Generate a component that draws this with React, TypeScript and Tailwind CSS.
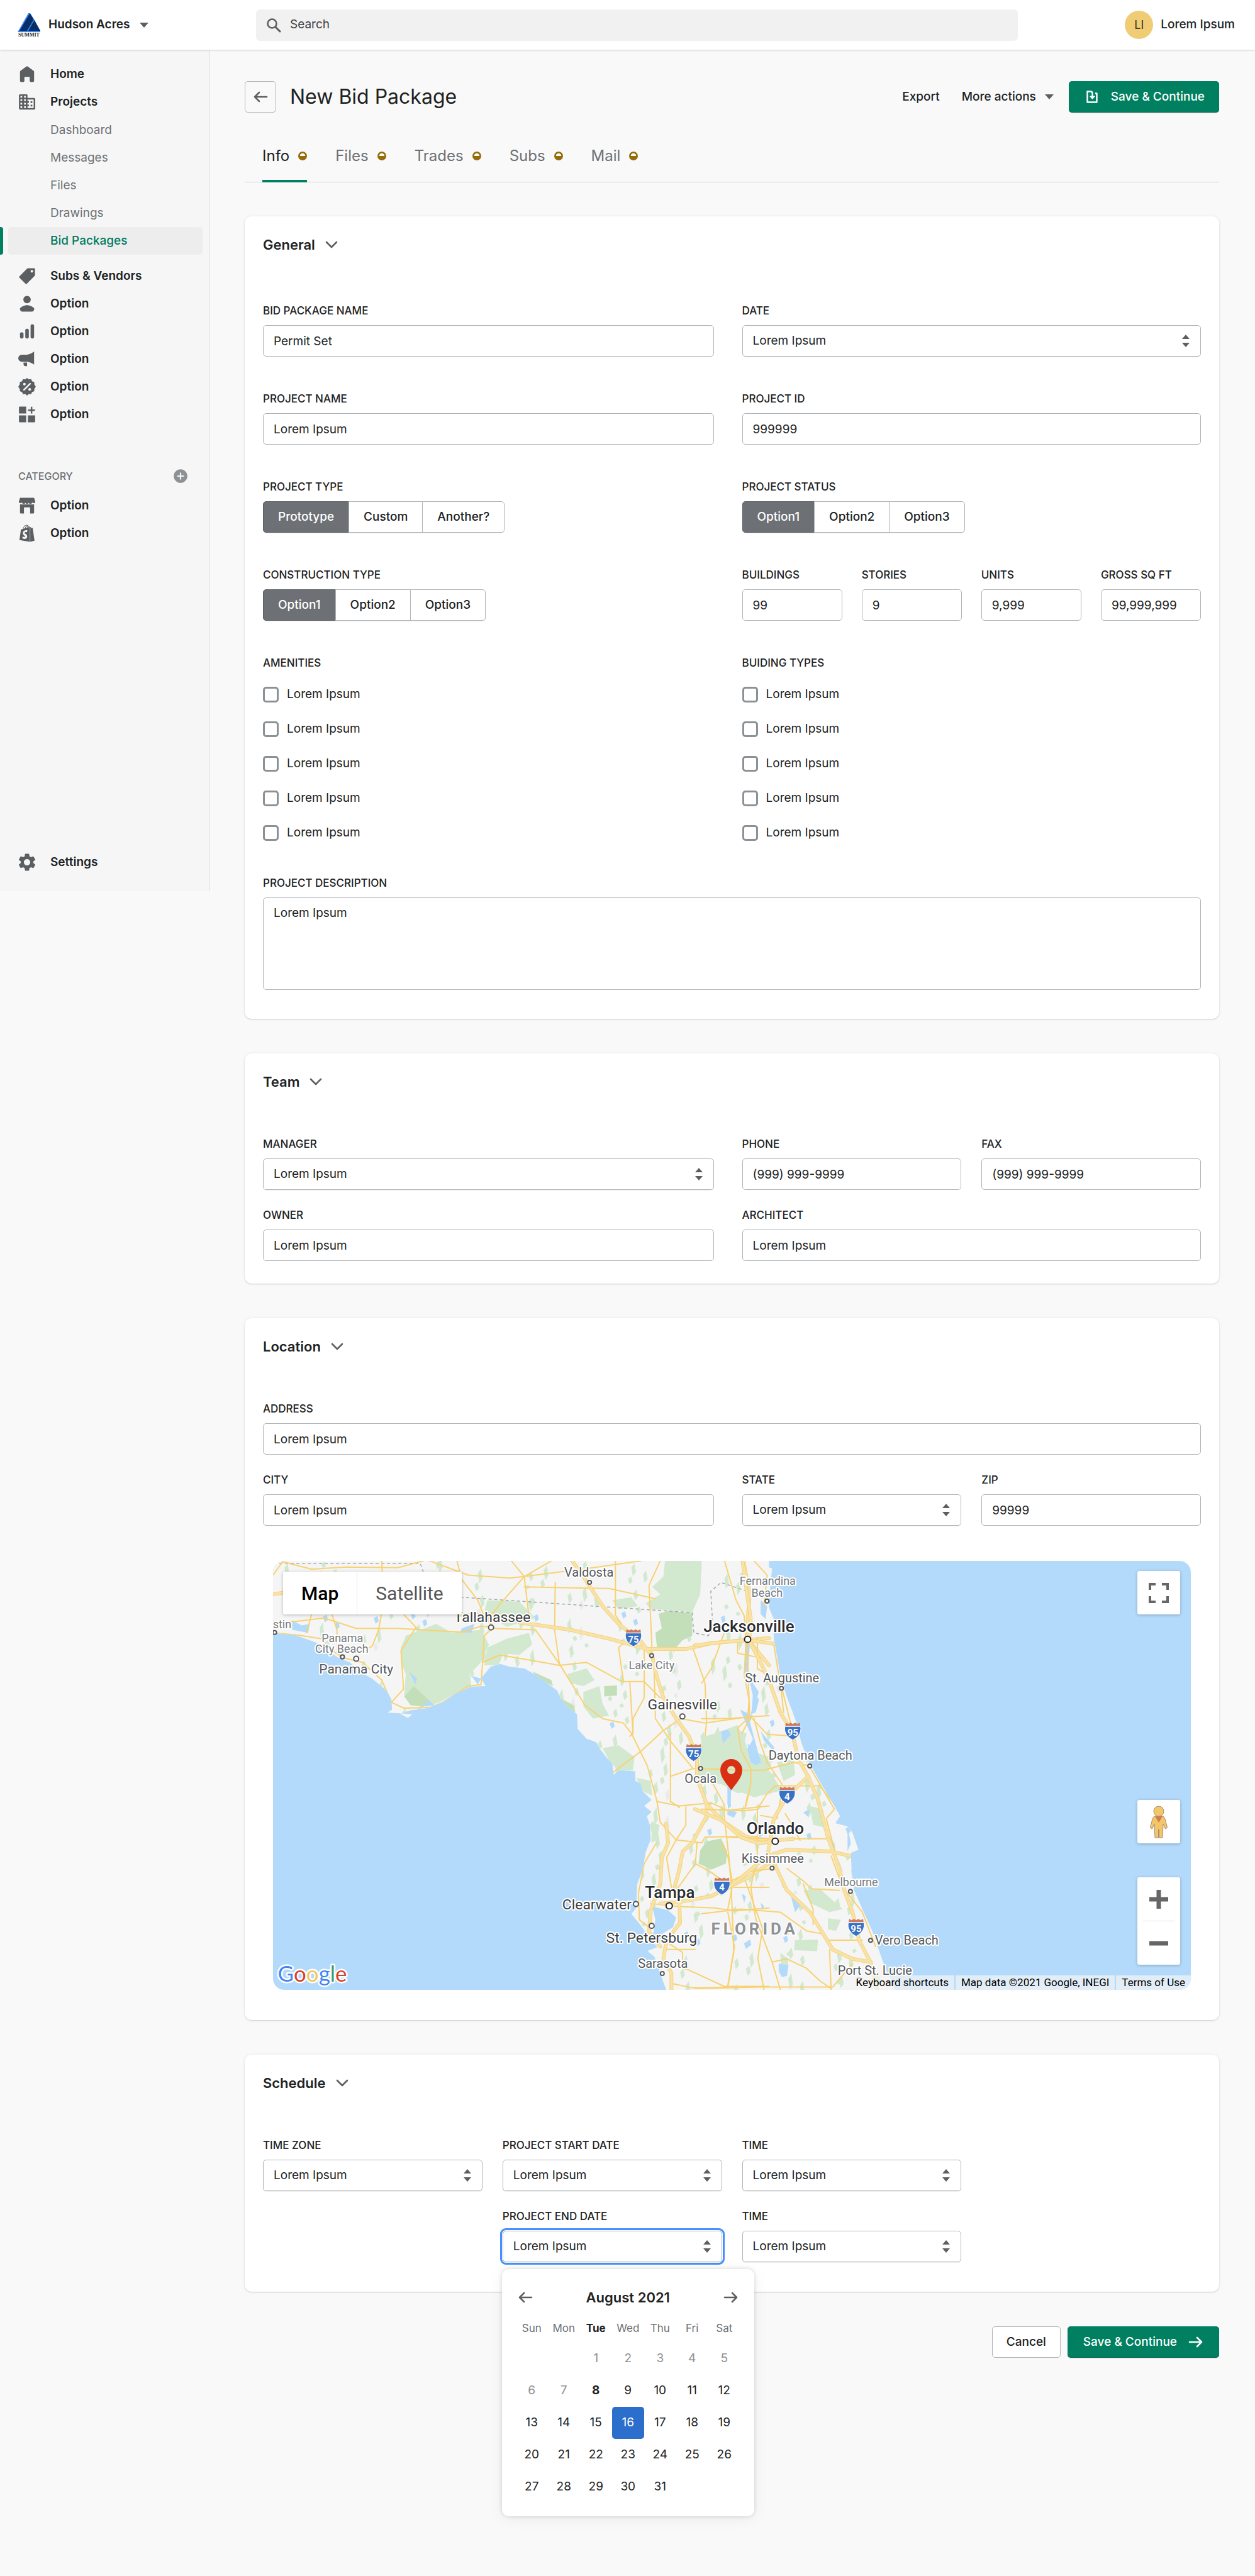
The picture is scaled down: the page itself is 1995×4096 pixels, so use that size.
import React, { useId, useState } from "react";
import { FaShopify } from "react-icons/fa";
import { MdAddCircle, MdSettings } from "react-icons/md";

/* ---------- Icons ---------- */

function Icon({ children }: { children: React.ReactNode }) {
  return (
    <svg viewBox="0 0 20 20" className="h-7 w-7 shrink-0 fill-[#5c5f62]" aria-hidden="true">
      {children}
    </svg>
  );
}

const HomeIcon = () => (
  <Icon>
    <path d="M18 7.3V17.5a1.5 1.5 0 0 1-1.5 1.5h-2a1.5 1.5 0 0 1-1.5-1.5V13H7v4.5A1.5 1.5 0 0 1 5.5 19h-2A1.5 1.5 0 0 1 2 17.5V7.3a1.5 1.5 0 0 1 .6-1.2l6.6-4.9a1.5 1.5 0 0 1 1.6 0l6.6 4.9a1.5 1.5 0 0 1 .6 1.2z" />
  </Icon>
);

const BuildingIcon = () => (
  <Icon>
    <path
      fillRule="evenodd"
      d="M2 1.500h7.500A1 1 0 0 1 10.500 2.500V5.500H18a1.300 1.300 0 0 1 1.300 1.300V17.500a1.300 1.300 0 0 1-1.300 1.300H2A1.300 1.300 0 0 1 .8 17.500V2.700A1.200 1.200 0 0 1 2 1.500zM2.500 3.200v2h2v-2zM6.600 3.200v2h2v-2zM2.500 7v2h2V7zM6.600 7v2h2V7zM2.500 11v2h2v-2zM6.600 11v2h2v-2zM2.500 15v2h2v-2zM6.600 15v2h2v-2zM10.500 7.300v1.700h1.700v2h-1.700v2h1.700v2h-1.700v2h7V7.300z"
    />
    <path d="M14 9.2h2v2h-2zM14 13.2h2v2h-2z" />
  </Icon>
);

const TagIcon = () => (
  <Icon>
    <path
      fillRule="evenodd"
      d="M10.3 1.3A1 1 0 0 1 11 1h7a1 1 0 0 1 1 1v7a1 1 0 0 1-.3.7l-9 9a1 1 0 0 1-1.4 0l-7-7a1 1 0 0 1 0-1.4zM15.5 6a1.5 1.5 0 1 0 0-3 1.5 1.5 0 0 0 0 3z"
    />
  </Icon>
);

const PersonIcon = () => (
  <Icon>
    <circle cx="10" cy="5.2" r="4.2" />
    <path d="M2.6 14.5c1.4-1.1 4.1-2.9 7.4-2.9s6.1 1.8 7.5 2.9c.6.5.8 1.3.6 2l-.4 1a2.1 2.1 0 0 1-2 1.500H4.4a2.1 2.1 0 0 1-2-1.500l-.4-1c-.2-.7 0-1.500.6-2z" />
  </Icon>
);

const BarsIcon = () => (
  <Icon>
    <rect x="2" y="11" width="4" height="7" rx="1.5" />
    <rect x="8" y="7" width="4" height="11" rx="1.5" />
    <rect x="14" y="2" width="4" height="16" rx="1.5" />
  </Icon>
);

const MegaphoneIcon = () => (
  <Icon>
    <path d="M18 1.5v14.7c-2.6-1.700-5-3-8-3.200H4A3.500 3.500 0 0 1 4 5h6c3-.2 5.400-1.800 8-3.500zM6 14h4v4H8.500A2.500 2.500 0 0 1 6 15.500z" />
  </Icon>
);

const DiscountIcon = () => (
  <Icon>
    <path d="M10 0l2 1.600 2.600-.3 1.100 2.400 2.500 1 .1 2.700L20 10l-1.700 2.300-.1 2.700-2.500 1-1.100 2.400-2.600-.2L10 20l-2-1.800-2.600.2L4.300 16l-2.500-1-.1-2.700L0 10l1.700-2.600.1-2.700 2.500-1 1.100-2.400 2.600.3z" />
    <path d="M6.500 13.500l7-7" stroke="#f6f6f6" strokeWidth="1.8" strokeLinecap="round" />
    <circle cx="7" cy="7" r="1.5" fill="#f6f6f6" />
    <circle cx="13" cy="13" r="1.5" fill="#f6f6f6" />
  </Icon>
);

const AppsIcon = () => (
  <Icon>
    <path d="M1.600 1H9v8H.8V1.800A.8.8 0 0 1 1.600 1zM.8 11H9v8H1.600a.8.8 0 0 1-.8-.8zM11 11h8.200v7.200a.8.8 0 0 1-.8.8H11zM14.200 1.200h1.800V4.200h3V6h-3v3h-1.800V6h-3V4.200h3z" />
  </Icon>
);

const StoreIcon = () => (
  <Icon>
    <path d="M2 1h16l1.300 4.500c0 1-.8 1.700-1.700 1.700a1.900 1.900 0 0 1-1.900-1.200 1.900 1.900 0 0 1-3.800 0 1.900 1.900 0 0 1-3.800 0 1.900 1.900 0 0 1-3.800 0A1.900 1.900 0 0 1 2.400 7.200C1.500 7.200.7 6.500.7 5.500z" />
    <path d="M2 8.500h16v9.500a1 1 0 0 1-1 1h-3.500v-7h-7v7H3a1 1 0 0 1-1-1z" />
  </Icon>
);

const ArrowIcon = ({ className }: { className?: string }) => (
  <svg viewBox="0 0 24 20" className={`h-5 w-6 shrink-0 fill-none stroke-current ${className ?? ""}`} aria-hidden="true">
    <path d="M2 10h19M14 3l7 7-7 7" strokeWidth="2.6" strokeLinecap="round" strokeLinejoin="round" />
  </svg>
);

const CaretIcon = () => (
  <svg viewBox="0 0 14 8" className="h-2 w-3.5 shrink-0 fill-[#5c5f62]" aria-hidden="true">
    <path d="M0 0h14L7 8z" />
  </svg>
);

const SummitLogo = () => (
  <svg viewBox="0 0 38 40" className="h-10 w-[38px] shrink-0" role="img" aria-label="Summit">
    <path d="M18 1h3l7 11 9 17v2H1z" fill="#3b87f7" />
    <path d="M20.500 1l6 10L16 29H4zM27.500 12l9.500 17H18z" fill="#072f66" />
    <text x="19" y="38" textAnchor="middle" fontSize="8" className="fill-[#222] font-['Liberation_Serif',serif] font-bold">
      SUMMIT
    </text>
  </svg>
);

/* ---------- Form pieces ---------- */

const LABEL = "block h-6 text-[17px] leading-6 font-medium uppercase text-[#202223]";
const CONTROL =
  "block h-[50px] w-full rounded-[5px] border border-[#aeb4b9] bg-white px-4 text-[19px] text-[#202223] outline-none";

function TextField({ label, value }: { label: string; value: string }) {
  const id = useId();
  return (
    <div>
      <label htmlFor={id} className={LABEL}>
        {label}
      </label>
      <input id={id} type="text" defaultValue={value} className={`mt-[11px] ${CONTROL}`} />
    </div>
  );
}

function SelectField({
  label,
  focused,
  children,
}: {
  label: string;
  focused?: boolean;
  children?: React.ReactNode;
}) {
  const id = useId();
  return (
    <div>
      <label htmlFor={id} className={LABEL}>
        {label}
      </label>
      <div
        className={`relative mt-[11px] rounded-[5px] shadow-[0_1px_1px_rgba(0,0,0,0.08)] ${
          focused ? "outline-[3px] outline-offset-1 outline-[#458fff]" : ""
        }`}
      >
        <select id={id} className={`appearance-none ${CONTROL}`}>
          <option>Lorem Ipsum</option>
        </select>
        <svg
          viewBox="0 0 12 20"
          className="pointer-events-none absolute right-[18px] top-[15px] h-5 w-3 fill-[#5c5f62]"
          aria-hidden="true"
        >
          <path d="M6 0l6 7H0zM6 20l6-7H0z" />
        </svg>
        {children}
      </div>
    </div>
  );
}

function Segmented({ label, options }: { label: string; options: string[] }) {
  const [active, setActive] = useState(options[0]);
  return (
    <fieldset>
      <legend className={LABEL}>{label}</legend>
      <div className="mt-[11px] flex">
        {options.map((o) => (
          <button
            key={o}
            type="button"
            aria-pressed={active === o}
            onClick={() => setActive(o)}
            className={`-ml-px h-[50px] border px-[23px] text-[19px] font-medium shadow-[0_1px_1px_rgba(0,0,0,0.08)] first:ml-0 first:rounded-l-[5px] last:rounded-r-[5px] ${
              active === o
                ? "border-[#5a5d61] bg-[#6d7175] text-white"
                : "border-[#aeb4b9] bg-white text-[#202223]"
            }`}
          >
            {o}
          </button>
        ))}
      </div>
    </fieldset>
  );
}

function CheckList({ label }: { label: string }) {
  return (
    <fieldset>
      <legend className={LABEL}>{label}</legend>
      <div className="mt-[26px] flex flex-col gap-[30px]">
        {[1, 2, 3, 4, 5].map((n) => (
          <label key={n} className="flex h-[25px] items-center gap-[13px] text-[19px] text-[#202223]">
            <input
              type="checkbox"
              className="h-[25px] w-[25px] appearance-none rounded-[5px] border-[3px] border-[#8c9196] bg-white checked:bg-[#008060]"
            />
            Lorem Ipsum
          </label>
        ))}
      </div>
    </fieldset>
  );
}

function Card({ title, className, children }: { title: string; className: string; children: React.ReactNode }) {
  return (
    <section
      className={`rounded-[11px] bg-white px-[29px] pt-7 shadow-[0_0_5px_rgba(23,24,24,0.07),0_1px_2px_rgba(0,0,0,0.14)] ${className}`}
    >
      <h2>
        <button type="button" className="flex h-[34px] items-center gap-4 text-[22px] font-semibold text-[#202223]">
          {title}
          <svg viewBox="0 0 20 12" className="h-3 w-5 fill-none stroke-[#5c5f62]" aria-hidden="true">
            <path d="M2 2l8 8 8-8" strokeWidth="2.6" strokeLinecap="round" strokeLinejoin="round" />
          </svg>
        </button>
      </h2>
      {children}
    </section>
  );
}

/* ---------- Calendar ---------- */

const WEEKDAYS = ["Sun", "Mon", "Tue", "Wed", "Thu", "Fri", "Sat"];
const WEEKS = [0, 1, 2, 3, 4].map((w) => WEEKDAYS.map((_, d) => w * 7 + d - 1));

function Calendar() {
  const [selected, setSelected] = useState(16);
  return (
    <div className="absolute -left-px top-[61px] z-10 w-[401px] rounded-[11px] bg-white px-[22px] pt-[23px] pb-[21px] shadow-[0_4px_24px_rgba(23,24,24,0.06),0_0_6px_rgba(23,24,24,0.16)]">
      <div className="mb-1.5 flex h-11 items-center justify-between px-[3px] text-[#5c5f62]">
        <button type="button" aria-label="Previous month">
          <ArrowIcon className="rotate-180" />
        </button>
        <h3 className="text-[22px] font-semibold text-[#202223]">August 2021</h3>
        <button type="button" aria-label="Next month">
          <ArrowIcon />
        </button>
      </div>
      <table className="w-full table-fixed text-center">
        <thead>
          <tr className="h-11">
            {WEEKDAYS.map((d) => (
              <th
                key={d}
                scope="col"
                className={`p-0 text-[17px] ${d === "Tue" ? "font-bold text-[#202223]" : "font-normal text-[#6d7175]"}`}
              >
                {d}
              </th>
            ))}
          </tr>
        </thead>
        <tbody>
          {WEEKS.map((week, i) => (
            <tr key={i} className="h-[51px]">
              {week.map((day) => (
                <td key={day} className="p-0">
                  {day > 0 && day < 32 && (
                    <button
                      type="button"
                      onClick={() => setSelected(day)}
                      className={`block h-[51px] w-full rounded-[5px] text-[19px] ${
                        day === selected
                          ? "bg-[#2c6ecb] text-white"
                          : day < 8
                            ? "text-[#8c9196]"
                            : "text-[#202223]"
                      } ${day === 8 ? "font-bold" : ""}`}
                    >
                      {day}
                    </button>
                  )}
                </td>
              ))}
            </tr>
          ))}
        </tbody>
      </table>
    </div>
  );
}

/* ---------- Map ---------- */

const GULF_LAND =
  "30,57 1580,57 1580,1510 1260,1510 1243,1460 1222,1395 1200,1375 1232,1362 1212,1340 1180,1290 1150,1250 1165,1230 1168,1150 1185,1100 1195,1040 1210,1000 1208,950 1198,920 1213,905 1190,885 1213,865 1185,835 1180,810 1162,800 1162,768 1110,764 1095,780 1090,740 1075,725 1050,690 1040,670 1010,658 982,625 980,575 945,545 928,520 918,495 880,465 855,445 815,420 770,415 740,405 710,415 692,438 680,455 695,480 650,482 600,505 560,535 510,555 460,562 430,572 388,570 402,560 400,525 385,495 340,455 300,430 270,400 235,385 170,335 100,308 30,300";

const ATLANTIC_LAND =
  "-90,54 130,54 118,68 155,78 150,130 144,200 160,240 160,300 170,360 180,420 200,490 225,560 245,640 270,705 305,770 345,840 362,872 348,895 385,905 400,925 418,980 395,990 398,1060 405,1110 430,1170 460,1240 480,1300 500,1360 520,1400 530,1430 -90,1430";

const GULF_FOREST = [
  "430,350 445,310 540,270 590,300 680,290 705,340 680,400 645,440 650,480 600,505 550,535 510,550 470,530 440,515 445,440 430,400",
  "1255,57 1370,57 1365,170 1340,230 1210,220 1195,200 1240,170 1215,145 1250,110",
  "1430,640 1470,625 1510,640 1500,690 1580,720 1580,830 1480,842 1430,810 1400,760 1415,700",
  "760,320 830,300 840,340 800,375 750,370 735,410 690,410 700,350",
  "950,440 1010,420 1035,460 1000,480 960,470",
  "1000,500 1050,480 1060,540 1080,580 1030,590 1000,550",
  "1060,690 1110,680 1160,720 1155,765 1110,764 1085,740",
  "1165,790 1210,800 1215,850 1185,835",
  "1215,940 1238,950 1230,1000 1212,1010",
  "1090,190 1150,180 1170,210 1110,220",
  "700,190 800,195 850,250 760,280 690,230",
];
const GULF_DARK = [
  "1235,235 1270,225 1340,235 1340,310 1310,325 1290,350 1230,350 1225,300 1245,285",
  "1365,1035 1385,1005 1430,995 1450,1040 1445,1080 1400,1100 1360,1080",
  "440,515 470,480 520,530 500,550 460,545",
  "1065,480 1105,478 1105,512 1065,515",
  "925,520 970,545 975,570 945,550",
  "840,430 900,460 905,480 860,455",
];
const ATLANTIC_FOREST = [
  "-60,620 0,600 50,580 75,640 90,700 150,730 185,790 100,812 0,770 -70,760",
  "225,1270 295,1268 292,1305 222,1302",
  "270,840 310,850 320,910 280,900",
  "250,1110 300,1105 370,1170 330,1180 270,1150",
  "180,1310 205,1330 200,1380 182,1360",
  "170,700 220,690 225,740 190,760",
  "325,1200 365,1205 350,1240 325,1235",
];

const GULF_HIGHWAYS = [
  "620,240 780,242 800,265 960,290 1080,320 1200,355 1320,355 1400,335 1580,318",
  "965,57 1000,110 1060,210 1110,270 1180,330 1215,380 1230,450 1250,520 1290,590 1330,650 1355,720 1355,790 1385,880 1385,920 1340,1010 1310,1040 1300,1100 1285,1160 1300,1210 1302,1280 1260,1340 1250,1400 1275,1450 1275,1510",
  "1385,880 1440,940 1510,990 1580,1002",
  "1240,1215 1300,1210 1400,1190 1470,1150 1510,1130 1580,1080",
  "1500,57 1520,170 1515,230 1512,320 1580,410",
  "1258,945 1265,1010 1245,1060 1240,1150 1210,1240 1205,1310 1240,1360",
  "30,170 60,165",
];
const GULF_ROADS = [
  "30,105 60,60 150,85 260,78 420,80 500,57",
  "30,262 100,262 190,250 290,285 420,285 620,298 680,278 720,280",
  "30,300 110,308 180,320 215,360 250,385 310,400 370,460 400,535 440,555 520,552 560,535 640,480 680,475 685,400 690,310 720,280",
  "190,95 150,240 135,300",
  "215,240 230,290 230,370",
  "370,57 375,200 360,290 340,345 300,370",
  "475,285 430,360 438,490 400,535",
  "440,240 480,285",
  "520,57 640,105 770,115 815,110 1030,80 1180,57",
  "605,57 620,120 670,190 690,245 720,280",
  "775,57 815,110 825,200 832,265",
  "900,57 815,110 750,190 700,255",
  "815,145 960,148 1080,150 1225,185",
  "912,130 910,290 925,405 1005,545 1060,590 1125,605 1150,640 1200,750 1230,870 1240,940",
  "720,285 850,290 925,405",
  "685,400 740,375 830,392 925,410 1010,400 1120,465 1190,465 1240,520",
  "1100,57 1100,240 1130,290",
  "1240,57 1205,140 1210,250 1215,370",
  "1130,330 1110,350 1125,465",
  "1145,465 1155,640 1145,650",
  "1190,360 1190,520 1155,590 1155,640",
  "1095,770 1180,700 1250,630 1305,590",
  "1220,380 1225,590 1275,670 1340,755",
  "1340,345 1380,470 1385,600 1375,700",
  "1440,300 1400,420 1370,470",
  "1305,590 1380,605 1510,585 1580,580",
  "1272,640 1272,870 1300,890",
  "1272,785 1340,760 1420,745 1580,770",
  "1230,870 1300,885 1400,875 1450,900 1580,885",
  "1395,790 1440,880 1440,920 1455,1060 1462,1160",
  "1512,320 1515,450 1520,590 1490,650 1500,740 1525,790 1505,890",
  "1240,940 1290,1000 1370,1010 1380,990 1540,988",
  "1320,885 1320,950 1290,1000 1260,1060 1275,1160",
  "1228,1010 1190,1080 1172,1180 1175,1270 1210,1300",
  "1210,1215 1300,1225 1410,1230 1470,1240 1580,1230",
  "1355,1010 1350,1080 1400,1110 1462,1160 1465,1240",
  "1350,1080 1290,1170",
  "1465,1240 1470,1380 1450,1500",
  "1260,1345 1310,1380 1310,1430 1440,1495 1580,1495",
  "1255,1370 1350,1370",
  "1500,1120 1520,1180 1560,1300 1545,1400 1565,1510",
  "1275,1485 1340,1500 1450,1498",
  "1470,1160 1580,1160",
];
const ATLANTIC_HIGHWAYS = [
  "65,54 80,170 90,240 85,310 125,390 150,450 180,540 215,600 235,690 265,745 295,820 325,940 360,1040 375,1110 400,1180 420,1270 455,1340 475,1428",
  "-80,325 0,315 85,308 160,320",
  "-80,850 0,885 60,940 115,960 165,950 220,945",
  "265,745 200,810 160,880 150,950 140,1000 60,1070 0,1120",
  "140,1000 200,980 330,985 395,1000",
  "155,1010 200,1110 270,1180 340,1300 400,1330 455,1340",
];
const ATLANTIC_ROADS = [
  "10,54 45,180 70,230 75,310",
  "100,54 140,100 130,200",
  "50,320 50,350 120,365",
  "75,320 70,420 85,500 80,560 50,590 60,660 90,720 90,770 75,840",
  "-60,560 0,560 90,555 140,610 215,615",
  "110,300 110,400 180,440 190,540",
  "160,320 175,420 215,590",
  "100,560 120,640 140,700 185,770",
  "-60,720 60,725 130,725 220,700 265,710",
  "165,775 300,775 350,840",
  "-60,850 70,855 110,850 140,800 165,775",
  "270,715 345,850 320,880 345,980",
  "0,960 20,1000 35,1090 20,1170",
  "20,940 165,945 330,945",
  "110,850 110,1000 90,1100 105,1200 155,1340 180,1428",
  "-60,1185 60,1170 180,1180 260,1240 310,1250",
  "155,1040 90,1050 30,1080",
  "200,1040 250,1080 275,1105 360,1110",
  "250,1090 280,1170 280,1220",
  "320,1270 430,1270",
  "330,1300 335,1428",
  "155,1340 200,1330 260,1360 300,1400 335,1425",
  "20,1180 40,1290 20,1420",
  "335,1000 370,1100 430,1180 470,1290",
  "-80,1425 120,1420 340,1420 400,1345",
  "195,865 210,890 240,950",
  "185,790 170,880 120,870",
];

const LAKES = [
  "1490,560 1530,580 1520,600 1540,680 1555,740 1520,745 1508,700 1530,660 1510,610",
  "1450,900 1480,905 1470,925 1450,915",
  "1450,810 1462,820 1460,890 1450,880",
  "1505,330 1520,340 1515,420 1530,470 1548,500 1525,580 1530,500 1505,430",
  "1215,1225 1265,1238 1290,1262 1280,1295 1245,1318 1238,1350 1218,1320 1225,1270",
  "90,258 120,275 145,270 140,300 90,290",
  "620,285 660,270 650,300 615,298",
  "650,445 680,455 670,475",
  "455,430 480,455 475,475",
  "490,550 520,530 535,545",
];
const ATLANTIC_LAKES = [
  "80,640 105,660 120,690 110,710 90,700",
  "175,1345 205,1350 200,1385 185,1388 175,1370",
  "90,460 105,480 115,500 105,540 90,545 100,500",
  "120,180 140,200 135,240 120,225",
  "0,600 20,595 30,610 5,640",
  "120,600 160,650 165,670 130,630",
  "210,1110 240,1160 225,1180 215,1140",
  "250,860 270,850 265,875",
  "325,930 345,960 350,1000 375,1060 360,1020 335,985",
  "20,790 30,840 20,850",
  "120,1150 130,1160 125,1175",
  "62,1120 75,1130 70,1150",
  "385,905 395,960 385,985",
];

// Small deterministic scatter of woodland and ponds over the mainland
const SCATTER = Array.from({ length: 560 }, (_, i) => {
  const x = (i * 197.3 + (i % 7) * 31) % 970;
  const y = (i * 89.7 + (i % 11) * 17) % 684;
  const a = 5 + ((i * 13) % 13);
  const b = 5 + ((i * 7) % 15);
  const pond = i % 13 === 4;
  return {
    points: pond
      ? `${x},${y} ${x + 6},${y - 3} ${x + 8},${y + 5} ${x + 3},${y + 9}`
      : `${x},${y} ${x + a},${y - b / 2} ${x + a * 1.5},${y + b / 2} ${x + a / 2},${y + b}`,
    fill: pond ? "#b3dafb" : i % 11 === 8 ? "#ebebeb" : "#d2e9cf",
  };
});

const TOWNS: [string, number, number, number, number, number, number, ("middle" | "start" | "end")?][] = [
  // name, label x, label y, size, weight, dot x, dot y
  ["Valdosta", 504, 25, 20, 400, 505, 34],
  ["Tallahassee", 350, 97, 23, 400, 348, 106],
  ["stin", 0, 107, 18, 400, 3, 114, "start"],
  ["Panama", 111, 129, 18, 400, 111, 153],
  ["City Beach", 110, 146, 18, 400, 111, 153],
  ["Panama City", 133, 180, 21, 400, 133, 156],
  ["Lake City", 604, 173, 18, 400, 604, 151],
  ["Jacksonville", 759, 113, 26, 500, 757, 125],
  ["Gainesville", 653, 237, 23, 400, 653, 248],
  ["Ocala", 682, 354, 20, 400, 682, 331],
  ["Clearwater", 572, 556, 23, 400, 579, 547, "end"],
  ["Tampa", 633, 538, 26, 500, 632, 550],
  ["St. Petersburg", 604, 609, 23, 400, 604, 582],
  ["Sarasota", 622, 649, 20, 400, 621, 658],
  ["Fernandina", 789, 38, 18, 400, 788, 64],
  ["Beach", 788, 57, 18, 400, 788, 64],
  ["St. Augustine", 812, 194, 20, 400, 811, 203],
  ["Daytona Beach", 857, 317, 20, 400, 856, 327],
  ["Orlando", 801, 435, 26, 500, 801, 447],
  ["Kissimmee", 797, 481, 20, 400, 796, 490],
  ["Melbourne", 922, 519, 18, 400, 921, 527],
  ["Vero Beach", 960, 612, 20, 400, 953, 605, "start"],
  ["Port St. Lucie", 960, 660, 20, 400, 935, 668],
];

const SHIELDS: [string, number, number][] = [
  ["75", 575, 123],
  ["75", 671, 306],
  ["4", 716, 519],
  ["95", 829, 272],
  ["4", 820, 374],
  ["95", 930, 585],
];

function Lines({ lines, stroke, width }: { lines: string[]; stroke: string; width: number }) {
  return (
    <g fill="none" stroke={stroke} strokeWidth={width} strokeLinejoin="round" strokeLinecap="round">
      {lines.map((p) => (
        <polyline key={p} points={p} vectorEffect="non-scaling-stroke" />
      ))}
    </g>
  );
}

function Shapes({ shapes, fill }: { shapes: string[]; fill: string }) {
  return (
    <g fill={fill}>
      {shapes.map((p) => (
        <polygon key={p} points={p} />
      ))}
    </g>
  );
}

function FloridaMap() {
  const gulf = "translate(-15 -27) scale(0.5102 0.4719)";
  const atlantic = "translate(715 -27) scale(0.523 0.4975)";
  return (
    <svg viewBox="0 0 1464 684" preserveAspectRatio="xMidYMid slice" className="h-full w-full" role="img" aria-label="Map of Florida">
      <defs>
        <clipPath id="land">
          <polygon points={GULF_LAND} transform={gulf} />
          <polygon points={ATLANTIC_LAND} transform={atlantic} />
        </clipPath>
      </defs>
      <rect width="1464" height="684" fill="#b3dafb" />
      <g transform={gulf}>
        <polygon points={GULF_LAND} fill="#f5f5f5" />
        <polygon points="425,572 465,575 452,588" fill="#f5f5f5" />
      </g>
      <polygon points={ATLANTIC_LAND} transform={atlantic} fill="#f5f5f5" />
      <g clipPath="url(#land)">
        {SCATTER.map((s) => (
          <polygon key={s.points} points={s.points} fill={s.fill} />
        ))}
        <g transform={gulf}>
          <Shapes shapes={GULF_FOREST} fill="#d2e9cf" />
          <Shapes shapes={GULF_DARK} fill="#c3dfba" />
          <Shapes shapes={LAKES} fill="#b3dafb" />
          <polyline
            points="50,65 490,65 500,95 500,170 620,180 1340,232 1345,300 1390,310 1405,290 1398,160 1430,130 1568,180"
            fill="none"
            stroke="#a5a9ad"
            strokeWidth="1.5"
            strokeDasharray="5 4"
            vectorEffect="non-scaling-stroke"
          />
          <Lines lines={GULF_ROADS} stroke="#f8d271" width={2} />
          <Lines lines={GULF_HIGHWAYS} stroke="#f4d483" width={6} />
          <Lines lines={GULF_HIGHWAYS} stroke="#f8e2a6" width={4} />
        </g>
        <g transform={atlantic}>
          <Shapes shapes={ATLANTIC_FOREST} fill="#d2e9cf" />
          <Shapes shapes={ATLANTIC_LAKES} fill="#b3dafb" />
          <Lines lines={ATLANTIC_ROADS} stroke="#f8d271" width={2} />
          <Lines lines={ATLANTIC_HIGHWAYS} stroke="#f4d483" width={6} />
          <Lines lines={ATLANTIC_HIGHWAYS} stroke="#f8e2a6" width={4} />
        </g>
      </g>

      {SHIELDS.map(([n, x, y]) => (
        <g key={`${x}`} transform={`translate(${x} ${y})`}>
          <path d="M-11-14l4 2 3.5-2L0-12l3.5-2 3.5 2 4-2 1 5h-24z" fill="#cd7a5c" />
          <path d="M-12.5-8h25c1.5 8-2 16-12.5 21.5C-10.5 8-14 0-12.5-8z" fill="#3871c5" stroke="#fff" strokeWidth="1" />
          <text y="7" textAnchor="middle" fontSize="15" className="fill-white font-[Roboto,sans-serif] font-bold">
            {n}
          </text>
        </g>
      ))}

      <text x="699" y="596" fontSize="26" className="fill-[#8d9296] stroke-white font-[Roboto,sans-serif] font-bold tracking-[5px] [paint-order:stroke] [stroke-width:3px]">
        FLORIDA
      </text>

      {TOWNS.map(([name, x, y, size, weight, dx, dy, anchor]) => (
        <g key={name}>
          <circle cx={dx} cy={dy} r={size > 23 ? 5 : size > 20 ? 4 : 3} fill="#fff" stroke={size > 23 ? "#202124" : "#55595d"} strokeWidth="2" />
          <text
            x={x}
            y={y}
            fontSize={size}
            fontWeight={weight}
            textAnchor={anchor ?? "middle"}
            fill={size > 23 ? "#2b2d30" : size > 21 ? "#3c4043" : size > 19 ? "#54585c" : "#767b80"}
            className="stroke-white font-[Roboto,sans-serif] [paint-order:stroke] [stroke-linejoin:round] [stroke-width:4px]"
          >
            {name}
          </text>
        </g>
      ))}

      <path
        fillRule="evenodd"
        d="M731 316c10 0 17.5 8 17.5 17.5 0 12-9.5 21-17.5 32-8-11-17.5-20-17.5-32C713.5 324 721 316 731 316zM731 327a6.5 6.5 0 1 0 0 13 6.5 6.5 0 0 0 0-13z"
        fill="#d93013"
      />

      <text x="8" y="671" fontSize="35" className="stroke-white font-[Lato,sans-serif] [paint-order:stroke] [stroke-linejoin:round] [stroke-width:5px]">
        <tspan fill="#4285f4">G</tspan>
        <tspan fill="#d93f2b">o</tspan>
        <tspan fill="#f3c55c">o</tspan>
        <tspan fill="#4285f4">g</tspan>
        <tspan fill="#3d9a6d">l</tspan>
        <tspan fill="#d93f2b">e</tspan>
      </text>
    </svg>
  );
}

const MAP_BUTTON = "flex w-[68px] items-center justify-center";
const MAP_PANEL = "rounded-[3px] bg-white shadow-[0_1px_5px_rgba(0,0,0,0.25)]";

function MapPanel() {
  return (
    <div className="relative mx-4 mt-14 aspect-[1459/682] overflow-hidden rounded-[18px] font-[Roboto,sans-serif]">
      <FloridaMap />
      <div className={`absolute left-4 top-[17px] flex h-[68px] text-[30px] ${MAP_PANEL}`}>
        <button type="button" className="border-r border-[#e6e6e6] px-[29px] font-medium text-black">
          Map
        </button>
        <button type="button" className="px-[29px] text-[#565656]">
          Satellite
        </button>
      </div>
      <div className={`absolute right-[17px] top-4 ${MAP_PANEL}`}>
        <button type="button" aria-label="Toggle fullscreen" className={`h-[69px] ${MAP_BUTTON}`}>
          <svg viewBox="0 0 32 32" className="h-8 w-8 fill-none stroke-[#666]">
            <path d="M2 11V2h9M21 2h9v9M30 21v9h-9M11 30H2v-9" strokeWidth="4" />
          </svg>
        </button>
      </div>
      <div className={`absolute bottom-[233px] right-[17px] ${MAP_PANEL}`}>
        <button type="button" aria-label="Street view" className={`h-[69px] ${MAP_BUTTON}`}>
          <svg viewBox="0 0 28 52" className="h-[52px] w-7">
            <path
              d="M7 17c-2 1-3 4-4 8l-2.5 10 3 2 3.5-8 1 22h5.5V38h1v13H20l1-22 3.5 8 3-2L25 25c-1-4-2-7-4-8z"
              fill="#f3c668"
              stroke="#a98a72"
              strokeWidth="1"
            />
            <path d="M8 17h12l-6 10z" fill="#cf7d55" />
            <circle cx="14" cy="9" r="8" fill="#f3c668" stroke="#a98a72" strokeWidth="1" />
          </svg>
        </button>
      </div>
      <div className={`absolute bottom-10 right-[17px] flex flex-col items-center ${MAP_PANEL}`}>
        <button type="button" aria-label="Zoom in" className={`h-[69px] ${MAP_BUTTON}`}>
          <svg viewBox="0 0 32 32" className="h-8 w-8 fill-none stroke-[#666]">
            <path d="M1 16h30M16 1v30" strokeWidth="7" />
          </svg>
        </button>
        <div className="h-px w-[51px] bg-[#e0e0e0]" />
        <button type="button" aria-label="Zoom out" className={`h-[69px] ${MAP_BUTTON}`}>
          <svg viewBox="0 0 32 32" className="h-8 w-8 fill-none stroke-[#666]">
            <path d="M1 16h30" strokeWidth="7" />
          </svg>
        </button>
      </div>
      <div className="absolute bottom-0 right-0 flex h-[23px] gap-0.5 text-[17px] leading-[23px] text-black">
        <button type="button" className="bg-[#f5f5f5]/70 px-[9px]">
          Keyboard shortcuts
        </button>
        <span className="bg-[#f5f5f5]/70 px-[9px]">Map data ©2021 Google, INEGI</span>
        <a href="#terms" className="bg-[#f5f5f5]/70 px-[9px]">
          Terms of Use
        </a>
      </div>
    </div>
  );
}

/* ---------- Page chrome ---------- */

function TopBar() {
  return (
    <header className="relative z-10 flex h-[79px] items-center bg-white pl-[27px] pr-8 shadow-[0_1px_3px_rgba(0,0,0,0.16)]">
      <div className="flex w-[380px] shrink-0 items-center gap-3">
        <SummitLogo />
        <button type="button" className="flex items-center gap-4 text-[19px] font-semibold text-[#202223]">
          Hudson Acres
          <CaretIcon />
        </button>
      </div>
      <label className="flex h-[50px] w-[1211px] min-w-0 shrink items-center gap-3.5 rounded-[6px] bg-[#f1f1f1] px-4">
        <svg viewBox="0 0 24 24" className="h-6 w-6 shrink-0 fill-none stroke-[#5c5f62]" aria-hidden="true">
          <circle cx="9.5" cy="9.5" r="7" strokeWidth="2.6" />
          <path d="M15 15l7 7" strokeWidth="3" strokeLinecap="round" />
        </svg>
        <input
          type="search"
          aria-label="Search"
          placeholder="Search"
          className="w-full bg-transparent text-[19px] text-[#202223] outline-none placeholder:text-[#3b3e40] placeholder:opacity-100"
        />
      </label>
      <div className="ml-auto flex shrink-0 items-center gap-3">
        <span className="flex h-[45px] w-[45px] items-center justify-center rounded-full bg-[#f0cc74] text-[18px] text-[#41351a]">
          LI
        </span>
        <span className="text-[19px] font-medium text-[#202223]">Lorem Ipsum</span>
      </div>
    </header>
  );
}

const NAV_ROW = "flex h-11 items-center gap-[23px] pl-[29px] text-[19px] font-semibold text-[#202223]";

const PROJECT_LINKS = ["Dashboard", "Messages", "Files", "Drawings", "Bid Packages"];

const NAV_OPTIONS = [
  { label: "Subs & Vendors", icon: TagIcon },
  { label: "Option", icon: PersonIcon },
  { label: "Option", icon: BarsIcon },
  { label: "Option", icon: MegaphoneIcon },
  { label: "Option", icon: DiscountIcon },
  { label: "Option", icon: AppsIcon },
];

function SideBar() {
  return (
    <aside className="w-[333px] shrink-0 self-start border-r border-[#d9dadb] bg-[#f6f6f6] pt-[17px] pb-6">
      <nav>
        <a href="#home" className={NAV_ROW}>
          <HomeIcon />
          Home
        </a>
        <a href="#projects" className={NAV_ROW}>
          <BuildingIcon />
          Projects
        </a>
        <div className="mt-px">
          {PROJECT_LINKS.map((label) => {
            const current = label === "Bid Packages";
            return (
              <div key={label} className="relative pl-[13px] pr-2.5">
                {current && <span className="absolute inset-y-0 left-0 w-[5px] rounded-r-[4px] bg-[#008060]" />}
                <a
                  href="#"
                  aria-current={current ? "page" : undefined}
                  className={`flex h-11 items-center rounded-[5px] pl-[67px] text-[19px] ${
                    current ? "bg-[#ededee] font-medium text-[#007b5c]" : "text-[#6d7175]"
                  }`}
                >
                  {label}
                </a>
              </div>
            );
          })}
        </div>
        <div className="mt-3">
          {NAV_OPTIONS.map(({ label, icon: NavIcon }, i) => (
            <a key={i} href="#" className={NAV_ROW}>
              <NavIcon />
              {label}
            </a>
          ))}
        </div>
        <div className="mt-[54px] flex h-11 items-center justify-between pl-[29px] pr-[32px]">
          <h2 className="text-[16px] font-medium uppercase text-[#6d7175]">Category</h2>
          <button type="button" aria-label="Add category">
            <MdAddCircle className="h-[26px] w-[26px] fill-[#8c9196]" />
          </button>
        </div>
        <div className="mt-[3px]">
          <a href="#" className={NAV_ROW}>
            <StoreIcon />
            Option
          </a>
          <a href="#" className={NAV_ROW}>
            <FaShopify className="h-7 w-7 shrink-0 fill-[#5c5f62]" />
            Option
          </a>
        </div>
        <a href="#settings" className={`mt-[479px] ${NAV_ROW}`}>
          <MdSettings viewBox="2 2 20 20" className="h-7 w-7 shrink-0 fill-[#5c5f62]" />
          Settings
        </a>
      </nav>
    </aside>
  );
}

const TABS = ["Info", "Files", "Trades", "Subs", "Mail"];
const PRIMARY =
  "flex h-[50px] items-center rounded-[5px] bg-[#008060] text-[19px] font-medium text-white shadow-[0_1px_1px_rgba(0,0,0,0.15),inset_0_-1px_0_rgba(0,0,0,0.2)]";

function PageHeader() {
  const [tab, setTab] = useState("Info");
  return (
    <>
      <div className="flex items-center">
        <button
          type="button"
          aria-label="Back"
          className="flex h-[50px] w-[50px] items-center justify-center rounded-[5px] border border-[#aeb4b9] text-[#5c5f62]"
        >
          <ArrowIcon className="rotate-180" />
        </button>
        <h1 className="ml-[22px] text-[32px] leading-[50px] text-[#202223]">New Bid Package</h1>
        <div className="ml-auto flex items-center text-[19px] font-medium text-[#202223]">
          <button type="button">Export</button>
          <button type="button" className="ml-[35px] flex items-center gap-3.5">
            More actions
            <CaretIcon />
          </button>
          <button type="button" className={`ml-6 gap-5 pl-[27px] pr-[23px] ${PRIMARY}`}>
            <svg viewBox="0 0 20 20" className="h-5 w-5 fill-none stroke-white" aria-hidden="true">
              <path d="M7 1.5H2.500v17h15V4.500H15M1.500 1.500H8a3 3 0 0 1 2.500 3V12" strokeWidth="2.4" strokeLinejoin="round" />
              <path d="M6.500 9l4 4.500 4-4.500z" fill="white" strokeWidth="1" />
            </svg>
            Save &amp; Continue
          </button>
        </div>
      </div>

      <nav className="mt-[27px] mb-[54px] flex gap-[45px] border-b border-[#d0d2d4] pl-7">
        {TABS.map((t) => (
          <button
            key={t}
            type="button"
            onClick={() => setTab(t)}
            className={`-mb-px flex h-[84px] items-center gap-3.5 border-y-4 border-t-transparent text-[24px] ${
              t === tab ? "border-b-[#008060] text-[#202223]" : "border-b-transparent text-[#6d7175]"
            }`}
          >
            {t}
            <svg viewBox="0 0 14 14" className="h-3.5 w-3.5" aria-hidden="true">
              <circle cx="7" cy="7" r="7" fill="#966b0a" />
              <path d="M2.8 7a4.2 4.2 0 0 1 8.4 0z" fill="#fff" />
            </svg>
          </button>
        ))}
      </nav>
    </>
  );
}

export default function App() {
  const descId = useId();
  return (
    <div className="min-h-screen bg-[#f9f9f9] font-[Inter,sans-serif]">
      <TopBar />
      <div className="flex">
        <SideBar />
        <main className="min-w-0 flex-1 pt-[50px] pr-[57px] pb-[347px] pl-14">
          <PageHeader />
          <div className="flex flex-col gap-[55px]">
            <Card title="General" className="pb-[46px]">
              <div className="mt-[76px] grid grid-cols-2 gap-x-8">
                <div className="flex flex-col gap-[55px] pr-[13px]">
                  <TextField label="Bid package name" value="Permit Set" />
                  <TextField label="Project name" value="Lorem Ipsum" />
                  <Segmented label="Project type" options={["Prototype", "Custom", "Another?"]} />
                  <Segmented label="Construction type" options={["Option1", "Option2", "Option3"]} />
                  <CheckList label="Amenities" />
                </div>
                <div className="flex flex-col gap-[55px]">
                  <SelectField label="Date" />
                  <TextField label="Project ID" value="999999" />
                  <Segmented label="Project status" options={["Option1", "Option2", "Option3"]} />
                  <div className="grid grid-cols-4 gap-[31px]">
                    <TextField label="Buildings" value="99" />
                    <TextField label="Stories" value="9" />
                    <TextField label="Units" value="9,999" />
                    <TextField label="Gross sq ft" value="99,999,999" />
                  </div>
                  <CheckList label="Buiding types" />
                </div>
              </div>
              <label htmlFor={descId} className={`mt-[55px] ${LABEL}`}>
                Project description
              </label>
              <textarea
                id={descId}
                defaultValue="Lorem Ipsum"
                className="mt-[11px] block h-[147px] w-full resize-none rounded-[5px] border border-[#aeb4b9] bg-white px-4 py-2.5 text-[19px] leading-7 text-[#202223] outline-none"
              />
            </Card>

            <Card title="Team" className="pb-9">
              <div className="mt-[70px] grid grid-cols-4 gap-x-8 gap-y-7">
                <div className="col-span-2 pr-[13px]">
                  <SelectField label="Manager" />
                </div>
                <TextField label="Phone" value="(999) 999-9999" />
                <TextField label="Fax" value="(999) 999-9999" />
                <div className="col-span-2 pr-[13px]">
                  <TextField label="Owner" value="Lorem Ipsum" />
                </div>
                <div className="col-span-2">
                  <TextField label="Architect" value="Lorem Ipsum" />
                </div>
              </div>
            </Card>

            <Card title="Location" className="pb-12">
              <div className="mt-[70px] grid grid-cols-4 gap-x-8 gap-y-7">
                <div className="col-span-4">
                  <TextField label="Address" value="Lorem Ipsum" />
                </div>
                <div className="col-span-2 pr-[13px]">
                  <TextField label="City" value="Lorem Ipsum" />
                </div>
                <SelectField label="State" />
                <TextField label="Zip" value="99999" />
              </div>
              <MapPanel />
            </Card>

            <Card title="Schedule" className="pb-[47px]">
              <div className="mt-[70px] grid grid-cols-4 gap-x-8 gap-y-7">
                <SelectField label="Time zone" />
                <SelectField label="Project start date" />
                <SelectField label="Time" />
                <div className="col-start-2">
                  <SelectField label="Project end date" focused>
                    <Calendar />
                  </SelectField>
                </div>
                <SelectField label="Time" />
              </div>
            </Card>

            <div className="flex justify-end gap-[11px]">
              <button
                type="button"
                className="h-[50px] rounded-[5px] border border-[#aeb4b9] bg-white px-[22px] text-[19px] font-medium text-[#202223]"
              >
                Cancel
              </button>
              <button type="button" className={`gap-[18px] px-[25px] ${PRIMARY}`}>
                Save &amp; Continue
                <ArrowIcon />
              </button>
            </div>
          </div>
        </main>
      </div>
    </div>
  );
}
